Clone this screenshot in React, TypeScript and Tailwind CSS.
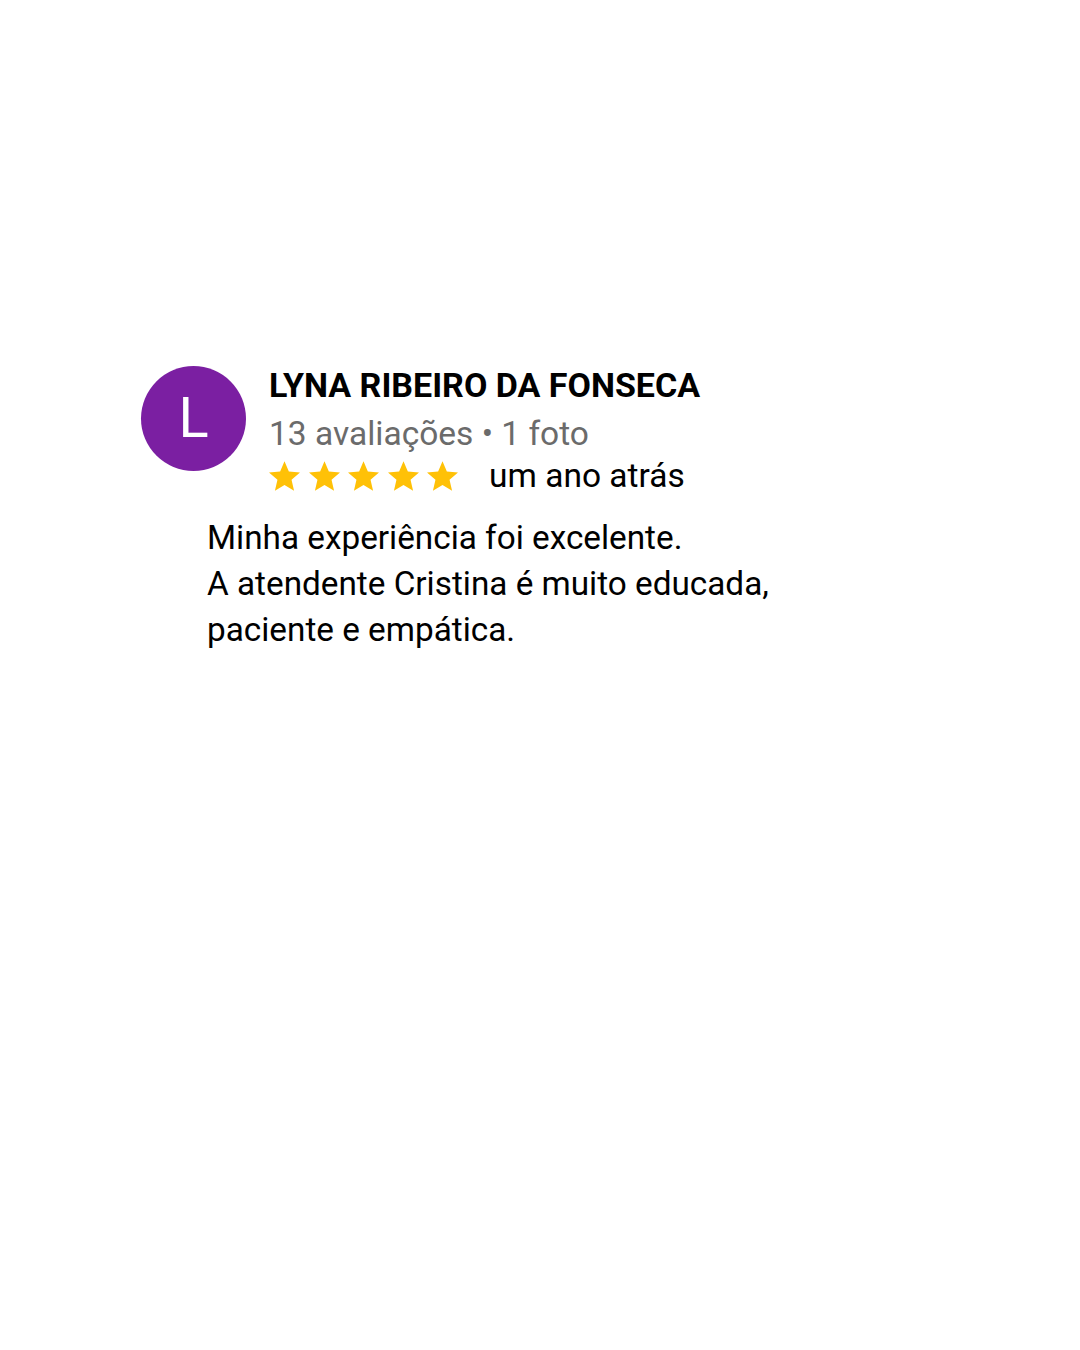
import React from "react";

const Star = () => (
  <svg width="31" height="30" viewBox="2 2 20 19" className="block shrink-0">
    <path
      d="M12 17.27L18.18 21l-1.64-7.03L22 9.24l-7.19-.61L12 2 9.19 8.63 2 9.24l5.46 4.73L5.82 21z"
      fill="#FFC107"
    />
  </svg>
);

export default function App() {
  return (
    <div
      className="w-[1080px] h-[1350px] bg-white pt-[366px] pl-[141px]"
      style={{ fontFamily: "Roboto, 'Liberation Sans', sans-serif" }}
    >
      <div className="flex">
        <div className="w-[105px] h-[105px] rounded-full bg-[#7B1FA2] flex items-center justify-center text-white text-[56px] font-normal leading-none shrink-0 pb-[2px]">
          L
        </div>
        <div className="ml-[23px] flex flex-col">
          <div className="text-[34px] font-bold leading-[38px] text-black">
            LYNA RIBEIRO DA FONSECA
          </div>
          <div className="mt-[11px] text-[33.5px] leading-[38px] text-[#6b6b6b]">
            13 avaliações • 1 foto
          </div>
          <div className="mt-[4px] flex items-center leading-[38px]">
            <div className="flex gap-[8.5px]">
              <Star />
              <Star />
              <Star />
              <Star />
              <Star />
            </div>
            <span className="ml-[31px] text-[33.5px] text-black">um ano atrás</span>
          </div>
        </div>
      </div>
      <div className="ml-[66px] mt-[20px] text-[33.3px] leading-[46px] text-black">
        <div>Minha experiência foi excelente.</div>
        <div>A atendente Cristina é muito educada,</div>
        <div>paciente e empática.</div>
      </div>
    </div>
  );
}
